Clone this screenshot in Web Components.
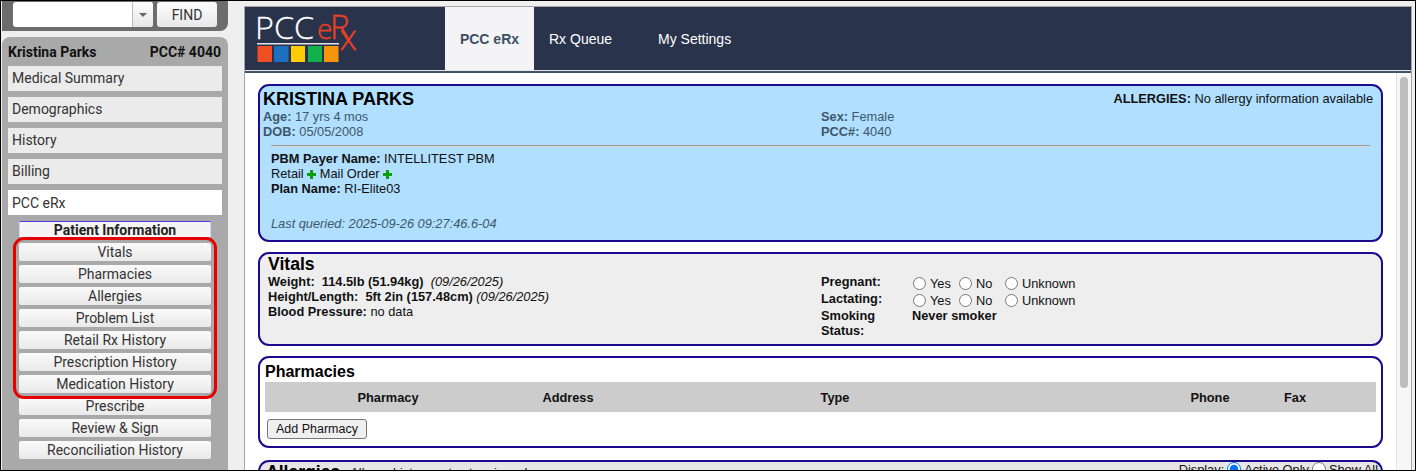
<!DOCTYPE html>
<html>
<head>
<meta charset="utf-8">
<title>PCC eRx</title>
<style>
  html, body { margin: 0; height: 471px; overflow: hidden; }
  body { background: #000; }
</style>
</head>
<body>
<chart-app>
  <chart-sidebar slot="sidebar" patient="Kristina Parks" pcc="PCC# 4040">
    <side-link>Medical Summary</side-link>
    <side-link>Demographics</side-link>
    <side-link>History</side-link>
    <side-link>Billing</side-link>
    <side-link active>PCC eRx</side-link>
    <side-group slot="sub" title="Patient Information">
      <side-button>Vitals</side-button>
      <side-button>Pharmacies</side-button>
      <side-button>Allergies</side-button>
      <side-button>Problem List</side-button>
      <side-button>Retail Rx History</side-button>
      <side-button>Prescription History</side-button>
      <side-button>Medication History</side-button>
      <side-button>Prescribe</side-button>
      <side-button>Review &amp; Sign</side-button>
      <side-button>Reconciliation History</side-button>
    </side-group>
  </chart-sidebar>
  <erx-frame slot="main">
    <patient-card></patient-card>
    <vitals-card></vitals-card>
    <pharmacies-card></pharmacies-card>
    <allergies-card></allergies-card>
  </erx-frame>
</chart-app>

<script>
function define(name, css, html, extra) {
  class El extends HTMLElement {
    constructor() {
      super();
      this.attachShadow({ mode: 'open' });
      this.shadowRoot.innerHTML = `<style>${css}</style>${html}`;
    }
    connectedCallback() {
      if (extra) extra(this);
    }
  }
  customElements.define(name, El);
}

define('chart-app', `
  :host { display: flex; box-sizing: border-box; width: 1416px; height: 471px; overflow: hidden;
    border: 1px solid #000; background: #efefef; }
`, `<slot name="sidebar"></slot><slot name="main"></slot>`);

define('chart-sidebar', `
  :host { display: block; flex: none; width: 226px; margin-left: 1px; font-family: Roboto, sans-serif; color: #222; }
  .find { display: flex; height: 30px; box-sizing: border-box; padding: 1px 11px 0 11px; gap: 4px;
    background: #6c6c6c; border-radius: 0 0 8px 0; }
  .combo { display: flex; width: 140px; height: 25px; background: #fff; border-radius: 3px; overflow: hidden; }
  .combo i { flex: 1; }
  .combo b { width: 20px; display: flex; align-items: center; justify-content: center;
    background: linear-gradient(#fdfdfd, #e6e6e6); border-left: 1px solid #bbb; }
  .combo b::after { content: ""; border: 4px solid transparent; border-top: 4px solid #666; border-bottom: 0; }
  .btn { width: 60px; height: 25px; display: flex; align-items: center; justify-content: center;
    font-size: 14px; color: #333; background: linear-gradient(#fcfcfc, #e8e8e8); border-radius: 3px; }
  .panel { position: relative; margin-top: 6px; height: 434px; box-sizing: border-box; padding: 7px 6px 0 6px;
    background: #a9a9a9; border-radius: 8px 8px 0 0; }
  .who { display: flex; justify-content: space-between; align-items: baseline; height: 22px;
    font-size: 14px; font-weight: 700; color: #111; padding: 0 1px 0 0; }
  .links { display: flex; flex-direction: column; gap: 6px; }
  .sub { display: block; padding: 6px 11px 0 11px; }
`, `
  <div class="find">
    <div class="combo"><i></i><b></b></div>
    <div class="btn">FIND</div>
  </div>
  <div class="panel">
    <div class="who"><span id="n"></span><span id="p"></span></div>
    <div class="links"><slot></slot></div>
    <div class="sub"><slot name="sub"></slot></div>
  </div>
`, el => {
  el.shadowRoot.getElementById('n').textContent = el.getAttribute('patient');
  el.shadowRoot.getElementById('p').textContent = el.getAttribute('pcc');
});

define('side-link', `
  :host { display: flex; align-items: center; box-sizing: border-box; height: 25px; padding: 0 0 1px 4px; background: #ebebeb;
    font-size: 14px; color: #333; }
  :host([active]) { background: #fff; padding-bottom: 0; }
`, `<slot></slot>`);

define('side-group', `
  :host { display: block; position: relative; }
  .head { height: 16px; box-sizing: border-box; border-top: 1px solid #4a3fe8; border-left: 1px solid #d4d4f8;
    border-right: 1px solid #d4d4f8; background: #f4f4f4; text-align: center; font-size: 14px; font-weight: 700;
    line-height: 17px; color: #222; }
  .list { display: flex; flex-direction: column; gap: 4px; margin-top: 6px; }
  .ring { position: absolute; left: -6px; right: -6px; top: 16px; height: 162px; box-sizing: border-box;
    border: 3px solid #e60000; border-radius: 11px; pointer-events: none; }
`, `
  <div class="head"></div>
  <div class="list"><slot></slot></div>
  <div class="ring"></div>
`, el => {
  el.shadowRoot.querySelector('.head').textContent = el.getAttribute('title');
  el.removeAttribute('title');
});

define('side-button', `
  :host { display: flex; align-items: center; justify-content: center; height: 18px;
    background: linear-gradient(#fafafa, #e9e9e9); border-radius: 2px; font-size: 14px; color: #333; }
`, `<slot></slot>`);

define('erx-frame', `
  :host { display: flex; flex-direction: column; flex: none; box-sizing: border-box; width: 1168px; height: 465px;
    margin: 5px 0 0 16px; background: #fff; border: solid #a6a6a6; border-width: 1px 1px 0 1px;
    font-family: "Liberation Sans", Arial, sans-serif; font-size: 12.8px; color: #111; overflow: hidden; }
  header { flex: none; display: flex; height: 63px; background: #29344c; border-bottom: 1px solid #e6e6e6;
    box-shadow: 0 2px 0 #3f5468; }
  .logo { width: 200px; flex: none; }
  nav { display: flex; }
  nav a { display: flex; align-items: center; font-size: 14px; color: #fff; }
  nav a.on { width: 89px; justify-content: center; background: #f4f4f6; color: #3c5064; font-weight: 700; }
  nav a.q { padding-left: 15px; width: 109px; box-sizing: border-box; }
  nav a.s { padding-left: 15px; }
  .body { flex: 1; display: flex; min-height: 0; margin-top: 2px; }
  .scroll { flex: 1; display: flex; flex-direction: column; gap: 10px; padding: 11px 13px 0 13px; min-width: 0; }
  .track { flex: none; width: 15px; box-sizing: border-box; background: #f7f7f7; border-left: 1px solid #e4e4e4; padding: 4px 3px 0 3px; }
  .thumb { width: 8px; height: 311px; background: #bdbdbd; border-radius: 4px; }
`, `
  <header>
    <div class="logo">
      <svg width="200" height="63" viewBox="0 0 200 63">
        <text x="10" y="32" font-family="Open Sans" font-weight="300" font-size="31" fill="#fff" stroke="#fff" stroke-width=".3" textLength="59" lengthAdjust="spacingAndGlyphs">PCC</text>
        <text font-family="Open Sans" font-weight="300" fill="#f0401f" stroke="#f0401f" stroke-width=".3"><tspan x="72" y="32" font-size="28">e</tspan><tspan x="85" y="32" font-size="33">R</tspan><tspan x="94.500" y="43" font-size="35">x</tspan></text>
        <rect x="12" y="36" width="82" height="1.500" fill="#e4e4e4"/>
        <rect x="12.500" y="39" width="14.500" height="16" fill="#f04e23"/>
        <rect x="29" y="39" width="14.500" height="16" fill="#1f6fc0"/>
        <rect x="46" y="39" width="14" height="16" fill="#ffcb05"/>
        <rect x="63" y="39" width="14" height="16" fill="#12b14b"/>
        <rect x="79" y="39" width="14.500" height="16" fill="#f7940d"/>
      </svg>
    </div>
    <nav>
      <a class="on">PCC eRx</a>
      <a class="q">Rx Queue</a>
      <a class="s">My Settings</a>
    </nav>
  </header>
  <div class="body">
    <div class="scroll"><slot></slot></div>
    <div class="track"><div class="thumb"></div></div>
  </div>
`);

const cardCss = `
  :host { display: block; flex: none; box-sizing: border-box; border: 2px solid #1b0a8c; border-radius: 11px; }
`;

define('patient-card', cardCss + `
  :host { height: 158px; background: #b0dfff; padding: 3px 8px 0 3px; }
  .top { display: flex; justify-content: space-between; }
  h2 { margin: 0; font-size: 18px; line-height: 20px; color: #000; }
  .alg { line-height: 20px; color: #111; }
  .meta { display: grid; grid-template-columns: 558px 1fr; grid-auto-rows: 15px; line-height: 15px; color: #3e5869; height: 36px; }
  hr { margin: 0 3px 0 8px; border: 0; height: 2px; background: linear-gradient(#9a9a9a 50%, #d9d9d9 50%); }
  .pbm { padding: 4px 0 0 8px; line-height: 15px; color: #111; }
  .plus { display: inline-block; vertical-align: -1px; }
  .last { margin: 20px 0 0 8px; font-style: italic; color: #3e5869; line-height: 15px; }
`, `
  <div class="top"><h2>KRISTINA PARKS</h2><div class="alg"><b>ALLERGIES:</b> No allergy information available</div></div>
  <div class="meta">
    <div><b>Age:</b> 17 yrs 4 mos</div><div><b>Sex:</b> Female</div>
    <div><b>DOB:</b> 05/05/2008</div><div><b>PCC#:</b> 4040</div>
  </div>
  <hr>
  <div class="pbm">
    <div><b>PBM Payer Name:</b> INTELLITEST PBM</div>
    <div>Retail <svg class="plus" width="9" height="9" viewBox="0 0 9 9"><path d="M3 0h3v3h3v3H6v3H3V6H0V3h3z" fill="#0a9f0a"/></svg> Mail Order <svg class="plus" width="9" height="9" viewBox="0 0 9 9"><path d="M3 0h3v3h3v3H6v3H3V6H0V3h3z" fill="#0a9f0a"/></svg></div>
    <div><b>Plan Name:</b> RI-Elite03</div>
  </div>
  <div class="last">Last queried: 2025-09-26 09:27:46.6-04</div>
`);

define('vitals-card', cardCss + `
  :host { height: 94px; background: #eee; padding: 0 8px 0 8px; color: #111; }
  h2 { margin: 0; font-size: 17.6px; line-height: 20px; color: #000; }
  .cols { display: grid; grid-template-columns: 553px 1fr; }
  .row { line-height: 15px; }
  .right { display: grid; grid-template-columns: 91px 1fr; grid-auto-rows: auto; line-height: 17px; margin-top: -1px; font-weight: 700; }
  .radios { display: flex; font-weight: 400; align-items: center; height: 17px; padding-top: 3px; box-sizing: border-box; }
  label { display: flex; align-items: center; }
  input { margin: 0 4px 0 1px; width: 13px; height: 13px; }
  label.y { width: 46px; } label.n { width: 46px; }
  .smoke { line-height: 15px; padding-top: 1px; }
`, `
  <h2>Vitals</h2>
  <div class="cols">
    <div>
      <div class="row"><b>Weight:&nbsp; 114.5lb (51.94kg)</b> &nbsp;<i>(09/26/2025)</i></div>
      <div class="row"><b>Height/Length:&nbsp; 5ft 2in (157.48cm)</b> <i>(09/26/2025)</i></div>
      <div class="row"><b>Blood Pressure:</b> no data</div>
    </div>
    <div class="right">
      <div>Pregnant:</div>
      <div class="radios"><label class="y"><input type="radio" name="pr">Yes</label><label class="n"><input type="radio" name="pr">No</label><label><input type="radio" name="pr">Unknown</label></div>
      <div>Lactating:</div>
      <div class="radios"><label class="y"><input type="radio" name="la">Yes</label><label class="n"><input type="radio" name="la">No</label><label><input type="radio" name="la">Unknown</label></div>
      <div class="smoke">Smoking<br>Status:</div>
      <div class="smoke">Never smoker</div>
    </div>
  </div>
`);

define('pharmacies-card', cardCss + `
  :host { height: 92px; background: #fff; padding: 3px 5px 0 5px; }
  h2 { margin: 0; font-size: 16px; line-height: 21px; color: #000; }
  .head { display: grid; grid-template-columns: 246px 114px 420px 120px 90px 80px 1fr; height: 30px; align-items: center;
    background: #ccc; text-align: center; font-weight: 700; color: #111; }
  button { display: block; margin: 7px 0 0 2px; width: 100px; height: 20px; padding: 0; background: #efefef;
    border: 1px solid #767676; border-radius: 3px; font: 12.5px "Liberation Sans", Arial, sans-serif; color: #111; }
`, `
  <h2>Pharmacies</h2>
  <div class="head"><span>Pharmacy</span><span>Address</span><span>Type</span><span></span><span>Phone</span><span>Fax</span></div>
  <button>Add Pharmacy</button>
`);

define('allergies-card', cardCss + `
  :host { height: 60px; margin-top: 2px; background: #e6e6e6; padding: 0 3px 0 6px; color: #111; border-bottom: 0; }
  .row { display: flex; align-items: flex-start; height: 20px; }
  h2 { margin: 0; font-size: 17.6px; line-height: 21px; color: #000; }
  .note { margin: 4px 0 0 10px; line-height: 14px; }
  .disp { margin-left: auto; display: flex; line-height: 14px; padding-top: 1px; }
  input { margin: -1px 3px 0 3px; width: 14px; height: 14px; }
  label { display: flex; }
`, `
  <div class="row">
    <h2>Allergies</h2>
    <div class="note">Allergy history not yet reviewed</div>
    <div class="disp">Display:<label><input type="radio" name="d" checked>Active Only</label><label><input type="radio" name="d">Show All</label></div>
  </div>
`);
</script>
</body>
</html>
